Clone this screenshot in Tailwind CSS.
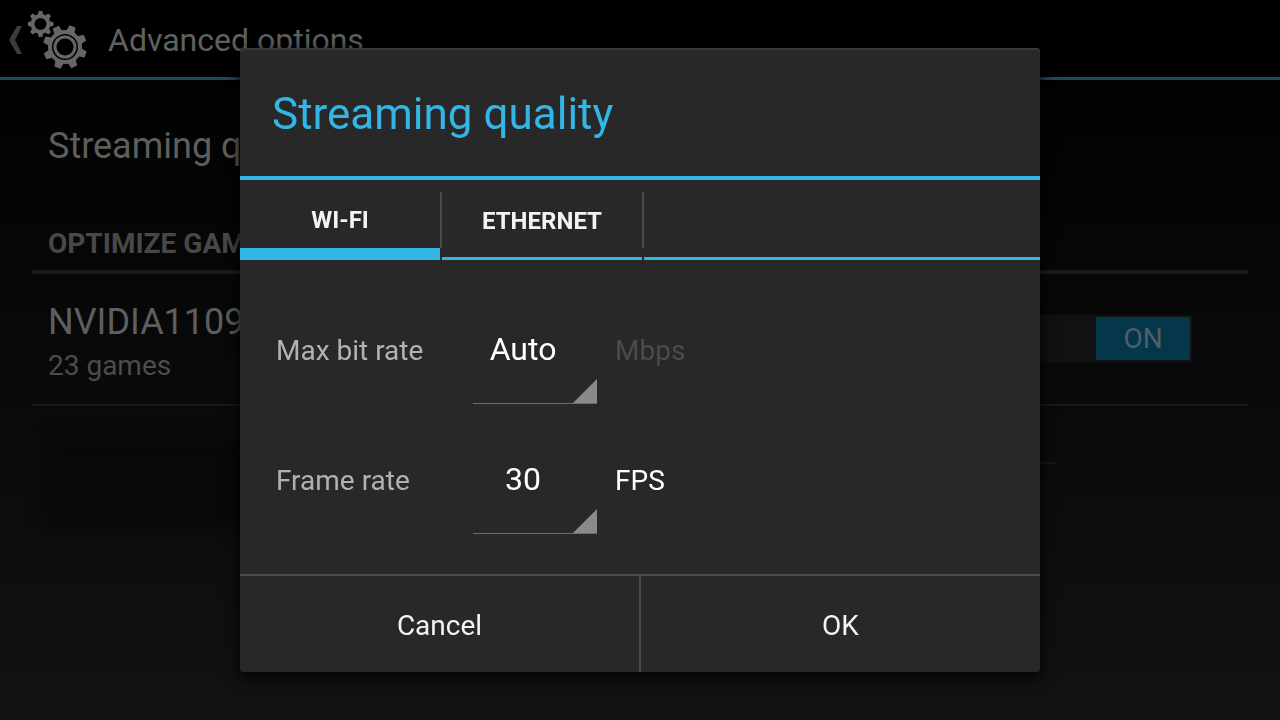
<!DOCTYPE html>
<html lang="en">
<head>
  <meta charset="UTF-8">
  <meta name="viewport" content="width=device-width, initial-scale=1.0">
  <title>Advanced options</title>
  <script src="https://cdn.jsdelivr.net/npm/@tailwindcss/browser@4"></script>
  <style>
    body { font-family: Roboto, 'Noto Sans', sans-serif; }
  </style>
</head>
<body class="min-h-screen bg-black bg-linear-to-b/srgb from-black to-[#111214] overflow-hidden">

  <!-- Action bar -->
  <header class="h-20 pt-0.5 border-b-3 border-[#204a5c] bg-black flex items-center">
    <a href="#" aria-label="Back" class="flex items-center pl-2">
      <svg class="w-4 h-7" viewBox="0 0 16 28" fill="#3c3c3c">
        <path d="M9 0H14L7 14L14 28H9L1 14Z"/>
      </svg>
      <svg class="w-16 h-16 ml-1" viewBox="28 8 64 64" fill="none">
        <defs>
          <path id="smallTooth" d="M-2.800 -9L-1.800 -13H1.800L2.800 -9Z"/>
          <path id="bigTooth" d="M-4.500 -15L-3.200 -22H3.200L4.500 -15Z"/>
        </defs>
        <g transform="translate(40.500 24)" fill="#666666">
          <circle r="8" stroke="#666666" stroke-width="4" fill="none"/>
          <use href="#smallTooth"/>
          <use href="#smallTooth" transform="rotate(45)"/>
          <use href="#smallTooth" transform="rotate(90)"/>
          <use href="#smallTooth" transform="rotate(135)"/>
          <use href="#smallTooth" transform="rotate(180)"/>
          <use href="#smallTooth" transform="rotate(225)"/>
          <use href="#smallTooth" transform="rotate(270)"/>
          <use href="#smallTooth" transform="rotate(315)"/>
        </g>
        <g transform="translate(65 47)" fill="#666666">
          <circle r="15" stroke="#666666" stroke-width="4" fill="none"/>
          <circle r="10" stroke="#666666" stroke-width="3" fill="none"/>
          <use href="#bigTooth" transform="rotate(20)"/>
          <use href="#bigTooth" transform="rotate(65)"/>
          <use href="#bigTooth" transform="rotate(110)"/>
          <use href="#bigTooth" transform="rotate(155)"/>
          <use href="#bigTooth" transform="rotate(200)"/>
          <use href="#bigTooth" transform="rotate(245)"/>
          <use href="#bigTooth" transform="rotate(290)"/>
          <use href="#bigTooth" transform="rotate(335)"/>
        </g>
      </svg>
    </a>
    <h1 class="ml-4 text-[32px] leading-10 text-[#606060]">Advanced options</h1>
  </header>

  <main class="px-8">
    <a href="#" class="flex items-center h-32 mb-1 pt-1 px-4 text-4xl text-[#5e5e5e]">Streaming quality</a>
    <h2 class="px-4 pt-3.5 pb-2 text-[28px] leading-9 font-bold text-[#484848] border-b-4 border-[#1b1c1e]">OPTIMIZE GAMES</h2>

    <div class="flex items-center justify-between h-33 pl-4 pr-14 border-b-2 border-[#17181a]">
      <div class="pt-1.5">
        <div class="text-4xl leading-12 text-[#5e5e5e]">NVIDIA1109</div>
        <div class="text-[28px] leading-10 text-[#4c4c4c]">23 games</div>
      </div>
      <label class="flex justify-end w-48 h-12 p-0.5 bg-[#111111]">
        <input type="checkbox" class="sr-only" checked aria-label="Optimize NVIDIA1109">
        <span class="flex items-center justify-center w-[94px] h-[43px] rounded-xs bg-[#04374a] text-[28px] text-[#4d6068]">ON</span>
      </label>
    </div>

    <div class="flex justify-between pl-3 pr-48 pt-8">
      <div class="w-[420px] h-22 bg-[#07080a] blur-sm"></div>
      <div class="w-40 h-0.5 mt-6 bg-[#161719]"></div>
    </div>
  </main>

  <!-- Streaming quality dialog -->
  <div class="fixed inset-0 flex items-center justify-center">
    <div role="dialog" aria-labelledby="dialogTitle" class="w-full max-w-[800px] rounded-sm bg-[#282828] text-[#f3f3f3] shadow-[0_4px_16px_#000000] inset-shadow-[0_2px_0_#383838] overflow-hidden">
      <h2 id="dialogTitle" class="flex items-center h-33 pt-1 px-8 border-b-4 border-[#33b5e5] text-[44px] text-[#33b5e5]">Streaming quality</h2>

      <div role="tablist" class="flex h-20 text-2xl font-bold">
        <button type="button" role="tab" aria-selected="true" class="w-50 pt-3 border-b-12 border-[#33b5e5]">WI-FI</button>
        <div class="w-0.5 h-14 mt-3 bg-[#4a4a4a]"></div>
        <button type="button" role="tab" aria-selected="false" class="w-50 pt-1 border-b-3 border-[#33b5e5]">ETHERNET</button>
        <div class="w-0.5 h-14 mt-3 bg-[#4a4a4a]"></div>
        <div class="flex-1 border-b-3 border-[#33b5e5]"></div>
      </div>

      <form id="qualityForm">
        <div class="px-9 pt-[26px] pb-7 text-[28px]">
          <div class="flex items-center h-[130px]">
            <label for="bitRate" class="w-[197px] text-[#b2b2b2]">Max bit rate</label>
            <div class="relative w-31 h-[106px] border-b border-[#6c6c6c]">
              <select id="bitRate" class="appearance-none w-full h-full pr-6 pb-1 text-[32px] text-white [text-align-last:center] outline-none">
                <option>Auto</option>
                <option>5</option>
                <option>10</option>
              </select>
              <svg class="absolute right-0 bottom-0 w-6 h-6 pointer-events-none" viewBox="0 0 24 24" fill="#8a8a8a"><path d="M24 0V24H0Z"/></svg>
            </div>
            <span class="ml-[18px] text-[#4b4b4b]">Mbps</span>
          </div>
          <div class="flex items-center h-[130px]">
            <label for="frameRate" class="w-[197px] text-[#b2b2b2]">Frame rate</label>
            <div class="relative w-31 h-[106px] border-b border-[#6c6c6c]">
              <select id="frameRate" class="appearance-none w-full h-full pr-6 pb-1 text-[32px] text-white [text-align-last:center] outline-none">
                <option>30</option>
                <option>60</option>
              </select>
              <svg class="absolute right-0 bottom-0 w-6 h-6 pointer-events-none" viewBox="0 0 24 24" fill="#8a8a8a"><path d="M24 0V24H0Z"/></svg>
            </div>
            <span class="ml-[18px] text-white">FPS</span>
          </div>
        </div>

        <div class="flex h-[98px] border-t-2 border-[#4a4a4a] text-[28px]">
          <button type="button" class="flex-1 pt-1 border-r-2 border-[#4a4a4a]">Cancel</button>
          <button type="submit" class="flex-1 pt-1">OK</button>
        </div>
      </form>
    </div>
  </div>

  <script>
    document.getElementById("qualityForm").addEventListener("submit", function(event) {
      event.preventDefault();
    });
  </script>
</body>
</html>
